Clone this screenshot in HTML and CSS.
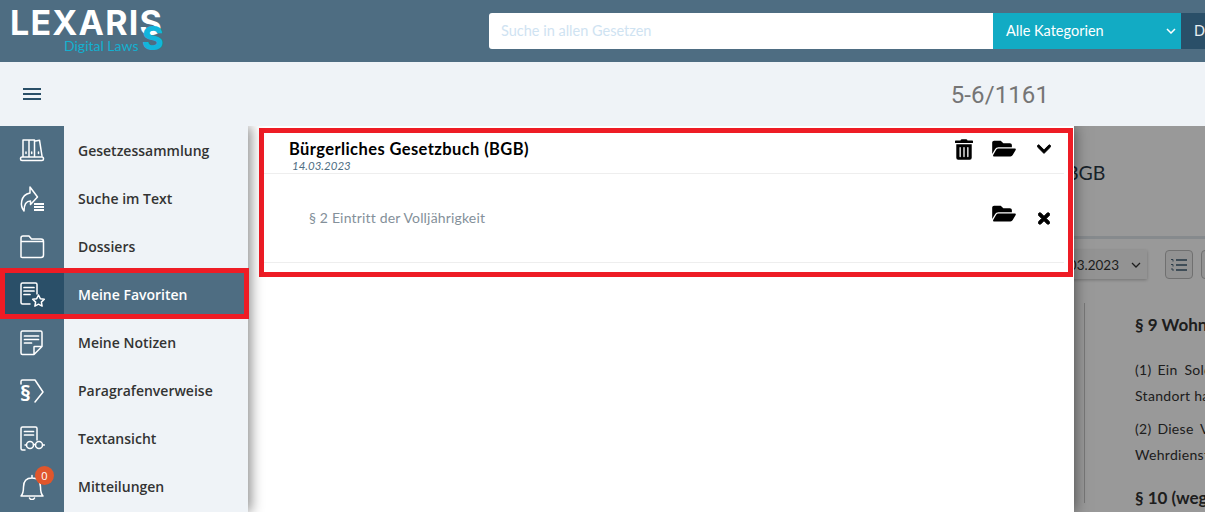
FILE: index.html
```html
<!DOCTYPE html>
<html lang="de">
<head>
<meta charset="utf-8">
<title>Lexaris Digital Laws</title>
<link rel="stylesheet" href="styles.css">
</head>
<body>
<header class="topbar">
  <div class="logo">
    <div class="logo-word">LEXARIS</div>
    <div class="logo-sub">Digital Laws</div>
    <span class="logo-s">S</span>
  </div>
  <form class="search">
    <div class="search-input">Suche in allen Gesetzen</div>
    <div class="search-cat">
      <span>Alle Kategorien</span>
      <svg class="cat-chev" viewBox="0 0 10 6"><path d="M1 1l4 4 4-4" fill="none" stroke="#fff" stroke-width="1.5"/></svg>
    </div>
    <div class="search-btn">Durchsuchen</div>
  </form>
</header>
<div class="toolbar">
  <button class="burger" type="button"><i></i><i></i><i></i></button>
  <div class="count">5-6/1161</div>
</div>
<div class="main">
  <nav class="sidebar">
    <a class="nav-item"><span class="nav-icon">
      <svg viewBox="0 0 26 26" class="ico"><path d="M4 18V2h6v16M10 18V2h5.500v16M16.500 3l4-.8L23 18M1.500 21c0-1 .5-2 1.500-2h20c1 0 1.500 1 1.500 2s-.5 1.500-1.500 1.500H3c-1 0-1.500-.5-1.500-1.500z"/><path d="M7 14v1.500M12.700 14v1.500M19.500 14v1.500"/></svg>
    </span><span class="nav-label">Gesetzessammlung</span></a>
    <a class="nav-item"><span class="nav-icon">
      <svg viewBox="0 0 26 26" class="ico"><path d="M11 1l7.500 10-7 7.500V15c-3.500 0-6.500 2-6.500 10C1 20 1 9 11 7z"/><path class="fat" d="M15 18h10M15 21h10M15 24h10"/></svg>
    </span><span class="nav-label">Suche im Text</span></a>
    <a class="nav-item"><span class="nav-icon">
      <svg viewBox="0 0 26 26" class="ico"><path d="M2 23V4c0-1 .5-2 2-2h6l2.500 3H22c1.500 0 2.500 1 2.500 2.500V21c0 1.500-1 2.500-2.500 2.500H3.500C2.500 23.500 2 23 2 23zM2 7.500h22.500"/></svg>
    </span><span class="nav-label">Dossiers</span></a>
    <a class="nav-item is-active"><span class="nav-icon">
      <svg viewBox="0 0 26 26" class="ico"><path d="M11 22H3.500C2.500 22 2 21.500 2 20.500V2.500C2 1.500 2.500 1 3.500 1h13c1 0 1.500.5 1.500 1.500V12"/><path class="med" d="M5 5.500h10M5 9h10M5 12.500h6"/><path d="M19.500 13l1.800 3.700 4 .6-2.900 2.800.7 4-3.600-1.900-3.600 1.900.7-4-2.900-2.800 4-.6z"/></svg>
    </span><span class="nav-label">Meine Favoriten</span></a>
    <a class="nav-item"><span class="nav-icon">
      <svg viewBox="0 0 26 26" class="ico"><path d="M15 24.500H3.500C2.500 24.500 2 24 2 23V2.500C2 1.500 2.500 1 3.500 1h18c1 0 1.500.5 1.500 1.500V16.500zM15 24.500V17c0-.5.2-.5.5-.5H23"/><path class="med" d="M5.500 6h14M5.500 9.500h14M5.500 13h7"/></svg>
    </span><span class="nav-label">Meine Notizen</span></a>
    <a class="nav-item"><span class="nav-icon nav-icon-tag">
      <svg viewBox="0 0 26 26" class="ico"><path d="M2 6V3.500C2 2.500 2.500 2 3.500 2H16l8 12-8 10"/></svg>
      <b class="para">§</b>
    </span><span class="nav-label">Paragrafenverweise</span></a>
    <a class="nav-item"><span class="nav-icon">
      <svg viewBox="0 0 26 26" class="ico"><path d="M6 24H3.500C2.500 24 2 23.500 2 22.500V2.500C2 1.500 2.500 1 3.500 1h13c1 0 1.500.500 1.500 1.500V14"/><path class="med" d="M5.500 5.500h9M5.500 9h9"/><circle cx="11" cy="19" r="3.500"/><circle cx="20" cy="19" r="3.500"/><path d="M14.500 18.500h2M7.500 19H6M23.500 19h2"/></svg>
    </span><span class="nav-label">Textansicht</span></a>
    <a class="nav-item"><span class="nav-icon">
      <svg viewBox="0 0 26 26" class="ico"><path d="M2 22c2-2 2.500-4 2.500-9S7 4 13 4s8.500 4 8.500 9 .5 7 2.500 9zM13 4V1.500M10.500 24c.5 1.300 1.500 1.500 2.500 1.500s2-.2 2.500-1.500"/></svg>
      <span class="badge">0</span>
    </span><span class="nav-label">Mitteilungen</span></a>
  </nav>
  <section class="doc">
    <h1 class="doc-title">BGB</h1>
    <div class="doc-rule"></div>
    <div class="doc-tools">
      <div class="date-select"><span>14.03.2023</span>
        <svg class="date-chev" viewBox="0 0 10 6"><path d="M1 1l4 4 4-4" fill="none" stroke="#333" stroke-width="1.300"/></svg>
      </div>
      <button class="tool-btn" type="button">
        <svg viewBox="0 0 16 14" class="list-ico"><path d="M5 2h11M5 7h11M5 12h11" stroke-width="1.600"/><path d="M0 1.500h2v2M0 6.500h2v2M0 11h2v2" stroke-width=".9"/></svg>
      </button>
      <button class="tool-btn" type="button"></button>
    </div>
    <article class="doc-text">
      <h2>§ 9 Wohnung</h2>
      <p class="first">(1) <span class="wide">Ein Soldat muss an seinem</span></p>
      <p>Standort haben</p>
      <p class="next">(2) <span class="wide">Diese Vorschrift gilt</span></p>
      <p>Wehrdienstleistende</p>
      <h2 class="sec">§ 10 (weggefallen)</h2>
    </article>
  </section>
  <div class="scrim"></div>
  <section class="panel">
    <div class="fav-group">
      <div class="fav-head">
        <div class="fav-title">
          <strong>Bürgerliches Gesetzbuch (BGB)</strong>
          <em>14.03.2023</em>
        </div>
        <div class="fav-actions">
          <svg class="fa fa-trash" viewBox="0 0 448 512"><path d="M32 464a48 48 0 0 0 48 48h288a48 48 0 0 0 48-48V128H32zm272-256a16 16 0 0 1 32 0v224a16 16 0 0 1-32 0zm-96 0a16 16 0 0 1 32 0v224a16 16 0 0 1-32 0zm-96 0a16 16 0 0 1 32 0v224a16 16 0 0 1-32 0zM432 32H312l-9.400-18.700A24 24 0 0 0 281.100 0H166.800a23.720 23.720 0 0 0-21.400 13.300L136 32H16A16 16 0 0 0 0 48v32a16 16 0 0 0 16 16h416a16 16 0 0 0 16-16V48a16 16 0 0 0-16-16z"/></svg>
          <svg class="fa fa-folder" viewBox="0 0 576 512"><path d="M572.694 292.093L500.270 416.248A63.997 63.997 0 0 1 444.989 448H45.025c-18.523 0-30.064-20.093-20.731-36.093l72.424-124.155A64 64 0 0 1 152 256h399.964c18.523 0 30.064 20.093 20.730 36.093zM152 224h328v-48c0-26.510-21.490-48-48-48H272l-64-64H48C21.490 64 0 85.490 0 112v278.046l69.077-118.418C86.214 242.250 117.989 224 152 224z"/></svg>
          <svg class="fa fa-chev" viewBox="0 0 448 512"><path d="M207.029 381.476L12.686 187.132c-9.373-9.373-9.373-24.569 0-33.941l22.667-22.667c9.357-9.357 24.522-9.375 33.901-.04L224 284.505l154.745-154.021c9.379-9.335 24.544-9.317 33.901.04l22.667 22.667c9.373 9.373 9.373 24.569 0 33.941L240.971 381.476c-9.373 9.372-24.569 9.372-33.942 0z"/></svg>
        </div>
      </div>
      <div class="fav-row">
        <span class="fav-law">§ 2 Eintritt der Volljährigkeit</span>
        <div class="fav-actions fav-actions-row">
          <svg class="fa fa-folder" viewBox="0 0 576 512"><path d="M572.694 292.093L500.270 416.248A63.997 63.997 0 0 1 444.989 448H45.025c-18.523 0-30.064-20.093-20.731-36.093l72.424-124.155A64 64 0 0 1 152 256h399.964c18.523 0 30.064 20.093 20.730 36.093zM152 224h328v-48c0-26.510-21.490-48-48-48H272l-64-64H48C21.490 64 0 85.490 0 112v278.046l69.077-118.418C86.214 242.250 117.989 224 152 224z"/></svg>
          <svg class="fa fa-times" viewBox="0 0 352 512"><path d="M242.720 256l100.070-100.070c12.280-12.280 12.280-32.190 0-44.480l-22.240-22.240c-12.280-12.280-32.190-12.280-44.480 0L176 189.280 75.930 89.210c-12.280-12.280-32.190-12.280-44.480 0L9.210 111.450c-12.280 12.280-12.280 32.190 0 44.480L109.280 256 9.210 356.070c-12.280 12.280-12.280 32.190 0 44.480l22.240 22.240c12.280 12.280 32.200 12.280 44.480 0L176 322.720l100.070 100.070c12.280 12.280 32.200 12.280 44.480 0l22.240-22.240c12.280-12.280 12.280-32.190 0-44.480L242.720 256z"/></svg>
        </div>
      </div>
    </div>
  </section>
</div>
</body>
</html>
```
FILE: styles.css
```css
* { box-sizing: border-box; }
html, body { margin: 0; height: 512px; overflow: hidden; }
body { font-family: "Lato", "Noto Sans", sans-serif; background: #eff3f7; color: #333; display: flex; flex-direction: column; }

.topbar { height: 62px; flex: none; background: #4e6d82; display: flex; align-items: flex-start; position: relative; z-index: 3; }
.logo { position: relative; width: 489px; flex: none; padding: 6px 0 0 10px; color: #fff; }
.logo-word { font: 700 34px/33px "Inter", sans-serif; letter-spacing: 1.2px; }
.logo-sub { font: 400 14px/14px "Lato", sans-serif; color: #13b0d0; margin: 0 0 0 54px; }
.logo-s { position: absolute; left: 142px; top: 19px; font: 800 33px/38px "Inter", sans-serif; color: #12b5dc; }
.search { display: flex; margin-top: 13px; height: 36px; flex: none; width: 900px; }
.search-input { width: 504px; background: #fff; color: #cfe3f2; font-size: 14.500px; line-height: 36px; padding-left: 12px; border-radius: 3px 0 0 3px; }
.search-cat { width: 188px; background: #12abc4; color: #fff; font-size: 14.500px; line-height: 36px; padding-left: 13px; position: relative; display: flex; align-items: center; }
.cat-chev { width: 10px; height: 6px; margin-left: auto; margin-right: 5px; }
.search-btn { width: 208px; background: #2a4f68; color: #e8eef2; font-size: 14.500px; line-height: 36px; padding-left: 13px; }

.toolbar { height: 64px; flex: none; background: #eff3f7; display: flex; align-items: center; justify-content: space-between; padding: 0 156px 0 23px; position: relative; z-index: 3; }
.burger { width: 18px; height: 12px; padding: 0; border: 0; background: none; display: flex; flex-direction: column; justify-content: space-between; }
.burger i { display: block; height: 2px; background: #2a4f68; }
.count { font: 400 24px/28px "Roboto", sans-serif; color: #757575; letter-spacing: .1px; padding-top: 2px; }

.main { position: relative; flex: 1; display: flex; min-height: 0; overflow: hidden; }
.sidebar { width: 248px; flex: none; background: linear-gradient(to right, #4e6d82 64px, #eff3f7 64px); position: relative; z-index: 3; box-shadow: 3px 0 12px rgba(0,0,0,.45); padding-bottom: 2px; }
.nav-item { display: flex; height: 48px; align-items: center; position: relative; color: #333; }
.nav-icon { width: 64px; height: 48px; flex: none; position: relative; display: flex; align-items: center; justify-content: center; padding-top: 2px; }
.ico { width: 26px; height: 26px; fill: none; stroke: #fff; stroke-width: 1.500; stroke-linejoin: round; stroke-linecap: round; }
.ico .fat { stroke-width: 2; stroke-linecap: butt; }
.ico .med { stroke-width: 1.700; }
.nav-label { padding: 2px 0 0 14px; font: 600 14px/20px "Open Sans", sans-serif; }
.is-active { background: #4e6d82; color: #fff; }
.is-active .nav-icon { background: #2a4f68; }
.is-active::after { content: ""; position: absolute; inset: -2px -1px -1px 0; border: 5px solid #ee1c25; pointer-events: none; }
.para { position: absolute; left: 20px; top: 12px; color: #fff; font: 700 22px/28px "Open Sans", sans-serif; }
.badge { position: absolute; left: 35px; top: 4px; width: 19px; height: 19px; border-radius: 50%; background: #e0562b; color: #fff; font: 400 11px/19px "Open Sans", sans-serif; text-align: center; }

.doc { flex: 1; min-width: 0; background: #fff; padding-left: 820px; white-space: nowrap; overflow: hidden; font-size: 14px; color: #333; }
.doc-title { margin: 0 0 0 -2px; height: 110px; padding-top: 35px; font: 400 19.500px/24px "Lato", sans-serif; color: #2a3a46; }
.doc-rule { height: 3px; margin-left: -820px; background: #dfe6eb; }
.doc-tools { display: flex; align-items: center; margin: 11px 0 0 -60px; height: 29px; }
.date-select { width: 139px; height: 29px; flex: none; background: #f6f6f6; box-shadow: 0 1px 3px rgba(0,0,0,.25); display: flex; align-items: center; justify-content: flex-end; padding-right: 6px; font-size: 13.500px; gap: 12px; }
.date-chev { width: 10px; height: 6px; }
.tool-btn { width: 28px; height: 29px; margin-left: 8px; padding: 0; border: 1px solid #bbb; border-radius: 4px; background: #f4f4f4; display: flex; align-items: center; justify-content: center; flex: none; }
.date-select + .tool-btn { margin-left: 18px; }
.list-ico { width: 16px; height: 14px; fill: none; stroke: #3c5a70; }
.doc-text { margin: 24px 0 0 16px; border-left: 1px solid #c8c8c8; padding: 11px 0 0 50px; height: 200px; }
.doc-text h2 { margin: 0; font: 700 17px/22px "Lato", sans-serif; color: #333; }
.doc-text p { margin: 0; font: 400 14px/26px "Lato", sans-serif; letter-spacing: .3px; }
.doc-text .first { margin-top: 21px; }
.doc-text .next { margin-top: 7px; }
.doc-text .sec { margin-top: 19px; }
.wide { margin-left: 2px; word-spacing: 3px; }

.scrim { position: absolute; inset: 0; left: 248px; background: rgba(0,0,0,.4); z-index: 1; }
.panel { position: absolute; left: 248px; top: 0; bottom: 0; width: 826px; background: #fff; z-index: 2; box-shadow: 0 0 14px rgba(0,0,0,.55); padding: 2px 1px 0 11px; }
.fav-group { height: 149px; border: 5px solid #ee1c25; }
.fav-head { height: 41px; display: flex; justify-content: space-between; border-bottom: 1px solid #eee; margin-right: 4px; padding: 8px 0 0 25px; }
.fav-title { display: flex; flex-direction: column; }
.fav-title strong { font: 700 16.500px/17px "Lato", sans-serif; letter-spacing: .4px; color: #000; }
.fav-title em { font: italic 400 11.500px/12px "Lato", sans-serif; color: #4e6d82; padding: 2px 0 0 3px; }
.fav-actions { display: flex; align-items: flex-start; }
.fav-row { height: 89px; display: flex; justify-content: space-between; align-items: flex-start; border-bottom: 1px solid #eee; margin-right: 4px; padding: 33px 0 0 45px; }
.fav-law { font: 400 14px/22px "Lato", sans-serif; letter-spacing: .17px; color: #84909a; }
.fa { display: block; fill: #000; flex: none; }
.fa-trash { width: 18px; height: 21px; margin: -2px 0 0 1px; }
.fa-folder { width: 24px; height: 21px; margin: -3px 0 0 19px; }
.fa-chev { width: 14px; height: 16px; margin: 0 13px 0 21px; stroke: #000; stroke-width: 30; }
.fav-actions-row .fa-folder { margin-top: -4px; }
.fa-times { width: 12px; height: 17px; margin: 3px 14px 0 22px; stroke: #000; stroke-width: 30; }
```
